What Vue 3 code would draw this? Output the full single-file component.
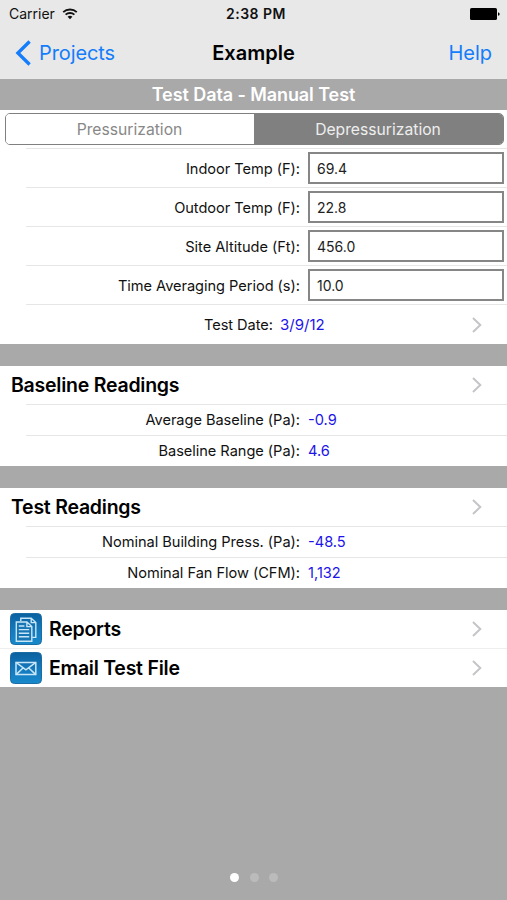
<template>
  <div class="screen">
    <div class="status-bar">
      <div class="carrier">
        <span>Carrier</span>
        <svg class="wifi" width="16" height="12" viewBox="0 0 16 12">
          <path d="M1.2 4.2C5 .6 11 .6 14.8 4.2M3.6 6.7c2.5-2.3 6.3-2.3 8.8 0" fill="none" stroke="#111" stroke-width="1.8" />
          <path d="M5.6 8.7c1.4-1.2 3.4-1.2 4.8 0L8 11.2z" fill="#111" />
        </svg>
      </div>
      <span class="clock">2:38 PM</span>
      <svg class="battery" width="30" height="12" viewBox="0 0 30 12">
        <rect width="27" height="12" rx="1.6" fill="#000" />
        <path d="M28 4.2q1.7.4 1.7 1.8T28 7.8z" fill="#000" />
      </svg>
    </div>

    <nav class="nav-bar">
      <a class="back">
        <svg width="16" height="26" viewBox="0 0 16 26">
          <path d="M14.6 1.5 2.9 13l11.7 11.5" fill="none" stroke="#137dfb" stroke-width="3.3" />
        </svg>
        <span>Projects</span>
      </a>
      <h1>Example</h1>
      <a class="help">Help</a>
    </nav>

    <div class="banner"><span>Test Data - Manual Test</span></div>

    <section class="group settings">
      <div class="segmented">
        <button
          v-for="m in modes"
          :key="m"
          :class="{ active: m === mode }"
          @click="mode = m"
        ><span>{{ m }}</span></button>
      </div>
      <label v-for="f in fields" :key="f.label" class="row field">
        <span class="label">{{ f.label }}</span>
        <input v-model="f.value" type="text">
      </label>
      <div class="row date">
        <span class="label">Test Date:</span>
        <span class="value">3/9/12</span>
        <svg class="chevron" width="10" height="16" viewBox="0 0 10 16"><path d="m1 1 7.3 7L1 15" /></svg>
      </div>
    </section>

    <section v-for="s in sections" :key="s.title" class="group">
      <div class="heading">
        <h2>{{ s.title }}</h2>
        <svg class="chevron" width="10" height="16" viewBox="0 0 10 16"><path d="m1 1 7.3 7L1 15" /></svg>
      </div>
      <div v-for="r in s.rows" :key="r.label" class="row reading">
        <span class="label">{{ r.label }}</span>
        <span class="value">{{ r.value }}</span>
      </div>
    </section>

    <section class="group actions">
      <div class="action">
        <svg class="icon" width="32" height="32" viewBox="0 0 32 32">
          <defs>
            <linearGradient id="tile" x1="0" y1="0" x2="0" y2="1">
              <stop offset="0" stop-color="#0b619f" />
              <stop offset=".5" stop-color="#1478bc" />
              <stop offset="1" stop-color="#1789ca" />
            </linearGradient>
          </defs>
          <rect x=".5" y=".5" width="31" height="31" rx="4" fill="url(#tile)" stroke="#1c6ca5" />
          <g fill="none" stroke="#c9e6f7" stroke-width="1.4">
            <path d="M10.8 8V5.2h10.4l4.6 4.4v14.8h-3.6M21.2 5.2v4.4h4.6" />
            <path d="M6.3 9h10.6l4.9 4.6v14.6H6.3zM16.9 9v4.6h4.9" fill="#1976b5" />
            <path d="M8.8 13h5.6M8.8 16.6h10.4M8.8 20.2h10.4M8.8 23.8h10.4" />
          </g>
        </svg>
        <h2>Reports</h2>
        <svg class="chevron" width="10" height="16" viewBox="0 0 10 16"><path d="m1 1 7.3 7L1 15" /></svg>
      </div>
      <div class="action">
        <svg class="icon" width="32" height="32" viewBox="0 0 32 32">
          <rect x=".5" y=".5" width="31" height="31" rx="4" fill="url(#tile)" stroke="#1c6ca5" />
          <g fill="none" stroke="#c9e6f7" stroke-width="1.5">
            <path d="M6 10.4h19.8v12.2H6z" />
            <path d="m6 10.4 9.9 7.4 9.9-7.4M6 22.6l7-6.6M25.8 22.6l-7-6.6" />
          </g>
        </svg>
        <h2>Email Test File</h2>
        <svg class="chevron" width="10" height="16" viewBox="0 0 10 16"><path d="m1 1 7.3 7L1 15" /></svg>
      </div>
    </section>

    <div class="pager">
      <i v-for="n in 3" :key="n" :class="{ current: n === 1 }"></i>
    </div>
  </div>
</template>

<script setup>
import { ref } from 'vue'

const modes = ['Pressurization', 'Depressurization']
const mode = ref('Depressurization')

const fields = ref([
  { label: 'Indoor Temp (F):', value: '69.4' },
  { label: 'Outdoor Temp (F):', value: '22.8' },
  { label: 'Site Altitude (Ft):', value: '456.0' },
  { label: 'Time Averaging Period (s):', value: '10.0' },
])

const sections = [
  {
    title: 'Baseline Readings',
    rows: [
      { label: 'Average Baseline (Pa):', value: '-0.9' },
      { label: 'Baseline Range (Pa):', value: '4.6' },
    ],
  },
  {
    title: 'Test Readings',
    rows: [
      { label: 'Nominal Building Press. (Pa):', value: '-48.5' },
      { label: 'Nominal Fan Flow (CFM):', value: '1,132' },
    ],
  },
]
</script>

<style>
body { margin: 0; background: #a9a9a9; }
</style>

<style scoped>
.screen {
  display: flex;
  flex-direction: column;
  box-sizing: border-box;
  height: 900px;
  background: #a9a9a9;
  font-family: Inter, "Liberation Sans", sans-serif;
  color: #111;
  overflow: hidden;
}
.status-bar {
  display: grid;
  grid-template-columns: 1fr auto 1fr;
  align-items: center;
  height: 27px;
  padding: 0 7px 0 9px;
  background: #e8e8e8;
  font-size: 14px;
}
.carrier { display: flex; align-items: center; gap: 7px; }
.clock { padding-left: 3px; font-weight: 600; letter-spacing: 0.5px; }
.battery { justify-self: end; }
.nav-bar {
  display: grid;
  grid-template-columns: 1fr auto 1fr;
  align-items: center;
  height: 52px;
  padding: 0 15px;
  background: #e8e8e8;
  font-size: 20px;
}
.back, .help { color: #137dfb; }
.back { display: flex; align-items: center; gap: 8px; letter-spacing: -0.1px; }
.help { justify-self: end; }
h1, h2 { margin: 0; font-weight: 600; color: #000; }
h1 { font-size: 20px; }
h2 { font-size: 19.5px; letter-spacing: -0.24px; }
.banner {
  display: flex;
  align-items: center;
  justify-content: center;
  height: 31px;
  color: #fff;
  font-size: 18px;
  font-weight: 600;
  letter-spacing: -0.08px;
}
.group { margin-bottom: 22px; background: #fff; }
.settings { padding-top: 3px; }
.segmented {
  display: grid;
  grid-template-columns: 248px 1fr;
  box-sizing: border-box;
  height: 32px;
  margin: 0 3.5px 3px 4.5px;
  border: 1.5px solid #808080;
  border-radius: 5px;
  overflow: hidden;
}
.segmented button {
  padding: 0;
  border: 0;
  background: #fff;
  color: #888;
  font: 15.7px Inter, sans-serif;
}
.segmented .active { background: #808080; color: #eee; }
.row {
  display: flex;
  align-items: center;
  box-sizing: border-box;
  margin-left: 26px;
  border-top: 1px solid #e6e6e6;
  font-size: 14.6px;
}
.label { width: 274px; text-align: right; white-space: nowrap; letter-spacing: -0.04px; }
.value { margin-left: 8px; color: #1c14ea; }
.field { height: 39px; }
.field .label { padding-top: 1px; }
.field input {
  box-sizing: border-box;
  width: 195.5px;
  height: 32px;
  margin: 0 0 0 8px;
  padding: 0 7px;
  border: 2px solid #868686;
  background: #fff;
  color: #222;
  font: 14px Inter, sans-serif;
  outline: 0;
}
.date { height: 40px; }
.date .label { width: 247px; }
.date .value { margin-left: 7px; font-size: 15px; }
.chevron {
  margin: 0 25px 0 auto;
  fill: none;
  stroke: #c5c5c9;
  stroke-width: 2;
}
.heading { display: flex; align-items: center; height: 38px; padding-left: 11px; }
.reading { height: 31px; }
.reading + .reading { height: 30.75px; }
.action { display: flex; align-items: center; height: 38.75px; padding-left: 10px; }
.action + .action { box-shadow: inset 0 1px #eee; }
.action h2 { margin-left: 7px; }
.pager {
  display: flex;
  justify-content: center;
  gap: 10.5px;
  margin-top: auto;
  padding: 0 0 18px 1px;
}
.pager i { width: 9px; height: 9px; border-radius: 50%; background: #bbb; }
.pager .current { background: #fff; }
</style>
